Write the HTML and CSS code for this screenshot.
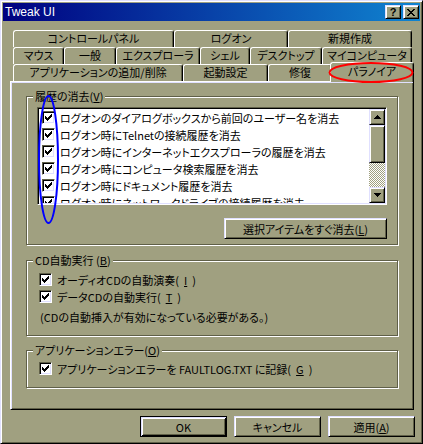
FILE: index.html
```html
<!DOCTYPE html>
<html lang="ja">
<head>
    <meta charset="UTF-8">
    <title>Tweak UI</title>
    <link rel="stylesheet" href="styles.css">
</head>
<body>
    <svg class="defs" width="0" height="0">
        <symbol id="check" viewBox="0 0 7 7">
            <rect x="6" y="0" width="1" height="1"/>
            <rect x="5" y="1" width="2" height="1"/>
            <rect x="0" y="2" width="1" height="1"/><rect x="4" y="2" width="3" height="1"/>
            <rect x="0" y="3" width="2" height="1"/><rect x="3" y="3" width="3" height="1"/>
            <rect x="0" y="4" width="5" height="1"/>
            <rect x="1" y="5" width="3" height="1"/>
            <rect x="2" y="6" width="1" height="1"/>
        </symbol>
    </svg>

    <div class="window">
        <div class="titlebar">
            <span class="title">Tweak UI</span>
            <div class="title-buttons">
                <button class="tb-btn help">?</button>
                <button class="tb-btn">
                    <svg width="8" height="7" viewBox="0 0 8 7" shape-rendering="crispEdges">
                        <path d="M0 0h2v1h1v1h2v-1h1v-1h2v1h-1v1h-1v1h-1v1h1v1h1v1h1v1h-2v-1h-1v-1h-2v1h-1v1h-2v-1h1v-1h1v-1h1v-1h-1v-1h-1v-1h-1z"/>
                    </svg>
                </button>
            </div>
        </div>

        <div class="tabs">
            <div class="tab-row row1">
                <div class="tab">コントロールパネル</div>
                <div class="tab">ログオン</div>
                <div class="tab">新規作成</div>
            </div>
            <div class="tab-row row2">
                <div class="tab">マウス</div>
                <div class="tab">一般</div>
                <div class="tab">エクスプローラ</div>
                <div class="tab">シェル</div>
                <div class="tab">デスクトップ</div>
                <div class="tab">マイコンピュータ</div>
            </div>
            <div class="tab-row row3">
                <div class="tab">アプリケーションの追加/削除</div>
                <div class="tab">起動設定</div>
                <div class="tab">修復</div>
                <div class="tab active">パラノイア</div>
            </div>
        </div>

        <div class="panel">
            <fieldset class="group history">
                <legend>履歴の消去(<u>V</u>)</legend>
                <div class="listbox">
                    <div class="list-items">
                        <div class="list-item"><span class="chk"><svg><use href="#check"/></svg></span>ログオンのダイアログボックスから前回のユーザー名を消去</div>
                        <div class="list-item"><span class="chk"><svg><use href="#check"/></svg></span>ログオン時にTelnetの接続履歴を消去</div>
                        <div class="list-item"><span class="chk"><svg><use href="#check"/></svg></span>ログオン時にインターネットエクスプローラの履歴を消去</div>
                        <div class="list-item"><span class="chk"><svg><use href="#check"/></svg></span>ログオン時にコンピュータ検索履歴を消去</div>
                        <div class="list-item"><span class="chk"><svg><use href="#check"/></svg></span>ログオン時にドキュメント履歴を消去</div>
                        <div class="list-item"><span class="chk"><svg><use href="#check"/></svg></span>ログオン時にネットワークドライブの接続履歴を消去</div>
                    </div>
                    <div class="scrollbar">
                        <div class="sb-btn">
                            <svg width="7" height="4" viewBox="0 0 7 4" shape-rendering="crispEdges"><path d="M3 0h1v1h1v1h1v1h1v1h-7v-1h1v-1h1v-1h1z"/></svg>
                        </div>
                        <div class="sb-thumb"></div>
                        <div class="sb-track"></div>
                        <div class="sb-btn">
                            <svg width="7" height="4" viewBox="0 0 7 4" shape-rendering="crispEdges"><path d="M0 0h7v1h-1v1h-1v1h-1v1h-1v-1h-1v-1h-1v-1h-1z"/></svg>
                        </div>
                    </div>
                </div>
                <button class="btn wide">選択アイテムをすぐ消去(<u>L</u>)</button>
            </fieldset>

            <fieldset class="group cd">
                <legend>CD自動実行 (<u>B</u>)</legend>
                <div class="check-row"><span class="chk"><svg><use href="#check"/></svg></span>オーディオCDの自動演奏(<u>I</u>)</div>
                <div class="check-row"><span class="chk"><svg><use href="#check"/></svg></span>データCDの自動実行(<u>T</u>)</div>
                <p class="note">(CDの自動挿入が有効になっている必要がある。)</p>
            </fieldset>

            <fieldset class="group app-error">
                <legend>アプリケーションエラー(<u>O</u>)</legend>
                <div class="check-row"><span class="chk"><svg><use href="#check"/></svg></span>アプリケーションエラーを FAULTLOG.TXT に記録(<u>G</u>)</div>
            </fieldset>
        </div>

        <div class="dialog-buttons">
            <button class="btn default">OK</button>
            <button class="btn">キャンセル</button>
            <button class="btn">適用(<u>A</u>)</button>
        </div>

        <!-- red / blue marker rings drawn over the screenshot -->
        <svg class="marks" width="423" height="444">
            <ellipse cx="371" cy="72.5" rx="41.5" ry="9.5" fill="none" stroke="#ff0000" stroke-width="2"/>
            <ellipse cx="48.5" cy="159.5" rx="9.5" ry="63.5" fill="none" stroke="#0000ff" stroke-width="2"/>
        </svg>
    </div>
</body>
</html>
```

FILE: styles.css
```css
body {
    margin: 0;
    font-family: "Noto Sans CJK JP", sans-serif;
    font-size: 11px;
    line-height: 14px;
    font-feature-settings: "palt";
    color: #000;
    background: #a0a080;
}
.defs {
    position: absolute;
}
.window {
    position: relative;
    width: 423px;
    height: 444px;
    box-sizing: border-box;
    border: 1px solid;
    border-color: #e0e0ff #000 #000 #e0e0ff;
    box-shadow: inset 1px 1px #fff, inset -1px -1px #606048;
    padding: 2px;
    background: #a0a080;
}
.titlebar {
    height: 18px;
    display: flex;
    align-items: center;
    padding: 0 1px 0 2px;
    background: linear-gradient(to right, #000080, #1084d0);
    color: #fff;
}
.title {
    font-family: "Liberation Sans", sans-serif;
    font-size: 12px;
}
.title-buttons {
    margin-left: auto;
    display: flex;
    gap: 2px;
}
.tb-btn, .btn {
    box-sizing: border-box;
    border: 1px solid;
    border-color: #e0e0ff #000 #000 #e0e0ff;
    box-shadow: inset 1px 1px #fff, inset -1px -1px #606048;
    background: #a0a080;
    color: #000;
    padding: 0;
    font: inherit;
}
.tb-btn {
    width: 16px;
    height: 14px;
    display: flex;
    align-items: center;
    justify-content: center;
}
.help {
    font-family: "Liberation Sans", sans-serif;
    font-weight: bold;
    font-size: 11px;
    line-height: 10px;
}

/* tabs */
.tabs {
    margin: 9px 0 0 10px;
    width: 399px;
}
.tab-row {
    display: grid;
    height: 17px;
}
.row1 { grid-template-columns: 161px 114px 124px; }
.row2 { grid-template-columns: 51px 52px 84px 50px 72px 90px; }
.row3 { grid-template-columns: 170px 85px 64px 80px; }
.tab {
    border: 1px solid #fff;
    border-right-color: #000;
    border-bottom: none;
    border-radius: 3px 3px 0 0;
    box-shadow: inset -1px 0 #606048;
    background: #a0a080;
    text-align: center;
    line-height: 15px;
    white-space: nowrap;
}
.tab.active {
    margin: -2px -2px -1px;
    position: relative;
    z-index: 1;
    line-height: 17px;
}

/* page */
.panel {
    margin-left: 7px;
    width: 404px;
    height: 329px;
    box-sizing: border-box;
    border: 1px solid;
    border-color: #fff #000 #000 #fff;
    box-shadow: inset 1px 1px #e0e0ff, inset -1px -1px #606048;
    padding: 7px 15px 0;
}
.group {
    margin: 0;
    min-width: 0;
    border: 1px solid #606048;
    box-shadow: inset 1px 1px #fff, 1px 1px #fff;
    padding: 4px 10px 5px 12px;
}
.group legend {
    margin-left: -6px;
    padding: 0 2px;
    line-height: 14px;
    background: #a0a080;
}
.history {
    padding: 4px 10px 5px 10px;
}
.history legend {
    margin-left: -4px;
}
.cd {
    margin-top: 8px;
    padding: 4px 10px 10px 12px;
}
.app-error {
    margin-top: 7px;
    padding: 3px 10px 10px 12px;
}

.listbox {
    height: 98px;
    box-sizing: border-box;
    border: 1px solid;
    border-color: #606048 #fff #fff #606048;
    box-shadow: inset 1px 1px #000, inset -1px -1px #e0e0ff;
    padding: 1px;
    background: #fff;
    display: flex;
}
.list-items {
    flex: 1;
    overflow: hidden;
}
.list-item {
    height: 17px;
    display: flex;
    align-items: center;
    gap: 5px;
    padding-left: 3px;
    white-space: nowrap;
}
.scrollbar {
    width: 16px;
    display: flex;
    flex-direction: column;
}
.sb-btn, .sb-thumb {
    box-sizing: border-box;
    border: 1px solid;
    border-color: #e0e0ff #000 #000 #e0e0ff;
    box-shadow: inset 1px 1px #fff, inset -1px -1px #606048;
    background: #a0a080;
}
.sb-btn {
    height: 16px;
    display: flex;
    align-items: center;
    justify-content: center;
}
.sb-thumb {
    height: 38px;
}
.sb-track {
    flex: 1;
    background: conic-gradient(#fff 25%, #a0a080 0 50%, #fff 0 75%, #a0a080 0);
    background-size: 2px 2px;
}

.chk {
    flex: none;
    width: 13px;
    height: 13px;
    box-sizing: border-box;
    border: 1px solid;
    border-color: #606048 #fff #fff #606048;
    box-shadow: inset 1px 1px #000, inset -1px -1px #e0e0ff;
    background: #fff;
    display: flex;
    align-items: center;
    justify-content: center;
}
.chk svg {
    width: 7px;
    height: 7px;
    shape-rendering: crispEdges;
}
.check-row {
    height: 17px;
    display: flex;
    align-items: center;
    gap: 5px;
    white-space: nowrap;
}
.note {
    margin: 4px 0 0 1px;
    line-height: 16px;
}

.btn {
    width: 87px;
    height: 21px;
}
.btn.wide {
    display: block;
    width: 163px;
    margin: 13px 0 0 auto;
}
.btn.default {
    border-color: #000;
    box-shadow: inset 1px 1px #e0e0ff, inset -1px -1px #000, inset 2px 2px #fff, inset -2px -2px #606048;
}
.dialog-buttons {
    margin: 6px 5px 0 0;
    display: flex;
    justify-content: flex-end;
    gap: 7px;
}
.marks {
    position: absolute;
    top: -1px;
    left: -1px;
    z-index: 2;
    pointer-events: none;
}
```
